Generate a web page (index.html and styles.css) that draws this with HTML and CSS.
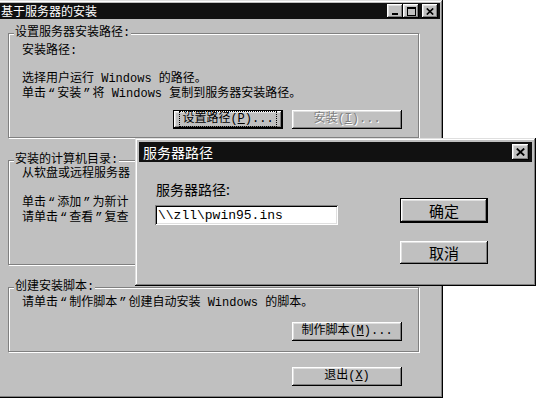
FILE: index.html
```html
<!DOCTYPE html>
<html lang="zh-CN">
<head>
  <meta charset="UTF-8" />
  <title>基于服务器的安装</title>
  <link rel="stylesheet" href="styles.css">
</head>
<body>
  <div class="window main-win">
    <div class="titlebar">
      <span class="title">基于服务器的安装</span>
      <div class="ctrls">
        <span class="ctl"><svg width="8" height="7" viewBox="0 0 8 7"><rect x="1" y="5" width="6" height="2" fill="#000"/></svg></span>
        <span class="ctl"><svg width="9" height="9" viewBox="0 0 9 9"><path fill="#000" fill-rule="evenodd" d="M0 0h9v9H0z M1 2h7v6H1z"/></svg></span>
        <span class="ctl close"><svg width="8" height="7" viewBox="0 0 8 7"><path d="M0.8 0.5L7.2 6.5M7.2 0.5L0.8 6.5" stroke="#000" stroke-width="1.7"/></svg></span>
      </div>
    </div>

    <div class="win-body">
      <div class="group g1">
        <span class="gtitle">设置服务器安装路径:</span>
        <p class="line first">安装路径:</p>
        <p class="line gap">选择用户运行 Windows 的路径。</p>
        <p class="line">单击<span class="q">“</span>安装<span class="q">”</span>将 Windows 复制到服务器安装路径。</p>
        <div class="btnrow">
          <button class="btn default"><span class="focus">设置路径(<u>P</u>)...</span></button>
          <button class="btn" disabled>安装(<u>I</u>)...</button>
        </div>
      </div>

      <!-- the rest of this group is hidden by the dialog -->
      <div class="group g2">
        <span class="gtitle">安装的计算机目录:</span>
        <p class="line">从软盘或远程服务器</p>
        <p class="line gap">单击<span class="q">“</span>添加<span class="q">”</span>为新计</p>
        <p class="line">请单击<span class="q">“</span>查看<span class="q">”</span>复查</p>
      </div>

      <div class="group g3">
        <span class="gtitle">创建安装脚本:</span>
        <p class="line">请单击<span class="q">“</span>制作脚本<span class="q">”</span>创建自动安装 Windows 的脚本。</p>
        <div class="btnrow">
          <button class="btn">制作脚本(<u>M</u>)...</button>
        </div>
      </div>

      <div class="footer">
        <button class="btn">退出(<u>X</u>)</button>
      </div>
    </div>
  </div>

  <div class="window dialog">
    <div class="titlebar big">
      <span class="title">服务器路径</span>
      <span class="ctl close big"><svg width="9" height="8" viewBox="0 0 9 8"><path d="M0.8 0.5L8.2 7.5M8.2 0.5L0.8 7.5" stroke="#000" stroke-width="1.8"/></svg></span>
    </div>
    <div class="dlg-body">
      <div class="dlg-left">
        <label class="dlg-label" for="serverPath">服务器路径:</label>
        <input type="text" id="serverPath" class="field" value="\\zll\pwin95.ins" />
      </div>
      <div class="dlg-right">
        <button class="btn dlg-btn default">确定</button>
        <button class="btn dlg-btn cancel">取消</button>
      </div>
    </div>
  </div>
</body>
</html>
```

FILE: styles.css
```css
body {
  margin: 0;
  padding: 0;
  background: #fff;
  color: #000;
  font-family: "Liberation Mono", "Noto Sans CJK SC", monospace;
  font-size: 12px;
  overflow: hidden;
  position: relative;
  height: 402px;
}
.window {
  background: #c0c0c0;
  padding: 3px;
  box-sizing: border-box;
  box-shadow: inset -1px -1px #000, inset 1px 1px #dfdfdf, inset -2px -2px #808080, inset 2px 2px #fff;
}
.main-win {
  width: 446px;
  height: 398px;
  margin-left: -3px;
}
.titlebar {
  height: 16px;
  background: #111;
  color: #fff;
  display: flex;
  align-items: center;
  justify-content: space-between;
  padding: 0 2px 0 1px;
}
.title {
  font-family: "Noto Sans CJK SC", sans-serif;
  font-size: 12px;
  line-height: 16px;
}
.ctrls {
  display: flex;
}
.ctl {
  width: 16px;
  height: 14px;
  box-sizing: border-box;
  background: #c0c0c0;
  display: flex;
  align-items: center;
  justify-content: center;
  box-shadow: inset -1px -1px #000, inset 1px 1px #fff, inset -2px -2px #808080, inset 2px 2px #dfdfdf;
}
.ctl.close {
  margin-left: 3px;
}
.win-body {
  padding: 14px 0 0 8px;
}
.group {
  width: 411px;
  box-sizing: border-box;
  border: 1px solid #808080;
  box-shadow: 1px 1px 0 #fff, inset 1px 1px 0 #fff;
  padding: 0 16px 8px 13px;
}
.gtitle {
  display: block;
  width: fit-content;
  margin: -8px 0 0 -8px;
  padding: 0 1px;
  background: #c0c0c0;
  line-height: 14px;
}
.line {
  margin: 0;
  height: 15px;
  line-height: 15px;
  white-space: nowrap;
}
.q {
  padding: 0 2px;
}
.line.first {
  margin-top: 4px;
}
.line.gap {
  margin-top: 13px;
}
.btnrow {
  display: flex;
  justify-content: flex-end;
  gap: 9px;
  margin-top: 8px;
}
.g2 {
  margin-top: 22px;
  padding-bottom: 38px;
}
.g2 .line.gap {
  margin-top: 14px;
}
.g3 {
  margin-top: 22px;
  padding-bottom: 10px;
}
.g3 .line {
  margin-top: 2px;
}
.g3 .btnrow {
  margin-top: 11px;
}
.btn {
  width: 110px;
  height: 19px;
  padding: 0;
  border: none;
  background: #c0c0c0;
  color: #000;
  font-family: inherit;
  font-size: 12px;
  line-height: 15px;
  box-sizing: border-box;
  box-shadow: inset -1px -1px #000, inset 1px 1px #fff, inset -2px -2px #808080, inset 2px 2px #dfdfdf;
}
.btn u {
  text-decoration: underline;
}
.btn.default {
  border: 1px solid #000;
}
.btn:disabled {
  color: #808080;
  text-shadow: 1px 1px 0 #fff;
}
.focus {
  outline: 1px dotted #000;
  outline-offset: 0;
  padding: 0 2px;
}
.footer {
  width: 411px;
  box-sizing: border-box;
  display: flex;
  justify-content: flex-end;
  padding-right: 17px;
  margin-top: 15px;
}

/* sub dialog over the main window */
.dialog {
  position: absolute;
  left: 135px;
  top: 138px;
  width: 401px;
  height: 148px;
  padding: 4px;
}
.titlebar.big {
  height: 20px;
  padding: 0 3px 0 4px;
}
.titlebar.big .title {
  font-size: 14px;
  line-height: 20px;
}
.ctl.big {
  width: 17px;
  height: 16px;
}
.dlg-body {
  display: flex;
  justify-content: space-between;
  padding: 18px 44px 0 16px;
}
.dlg-left {
  display: flex;
  flex-direction: column;
}
.dlg-label {
  font-family: "Noto Sans CJK SC", sans-serif;
  font-size: 14px;
  line-height: 18px;
  margin-left: 1px;
}
.field {
  width: 183px;
  height: 20px;
  margin: 7px 0 0;
  padding: 0 3px;
  box-sizing: border-box;
  border: none;
  background: #fff;
  font-family: "Liberation Mono", monospace;
  font-size: 13px;
  color: #000;
  box-shadow: inset 1px 1px #808080, inset -1px -1px #fff, inset 2px 2px #000, inset -2px -2px #dfdfdf;
}
.dlg-right {
  display: flex;
  flex-direction: column;
}
.dlg-btn {
  width: 88px;
  height: 25px;
  margin-top: 18px;
  font-family: "Noto Sans CJK SC", sans-serif;
  font-size: 15px;
}
.dlg-btn.cancel {
  height: 23px;
  margin-top: 18px;
}
```
